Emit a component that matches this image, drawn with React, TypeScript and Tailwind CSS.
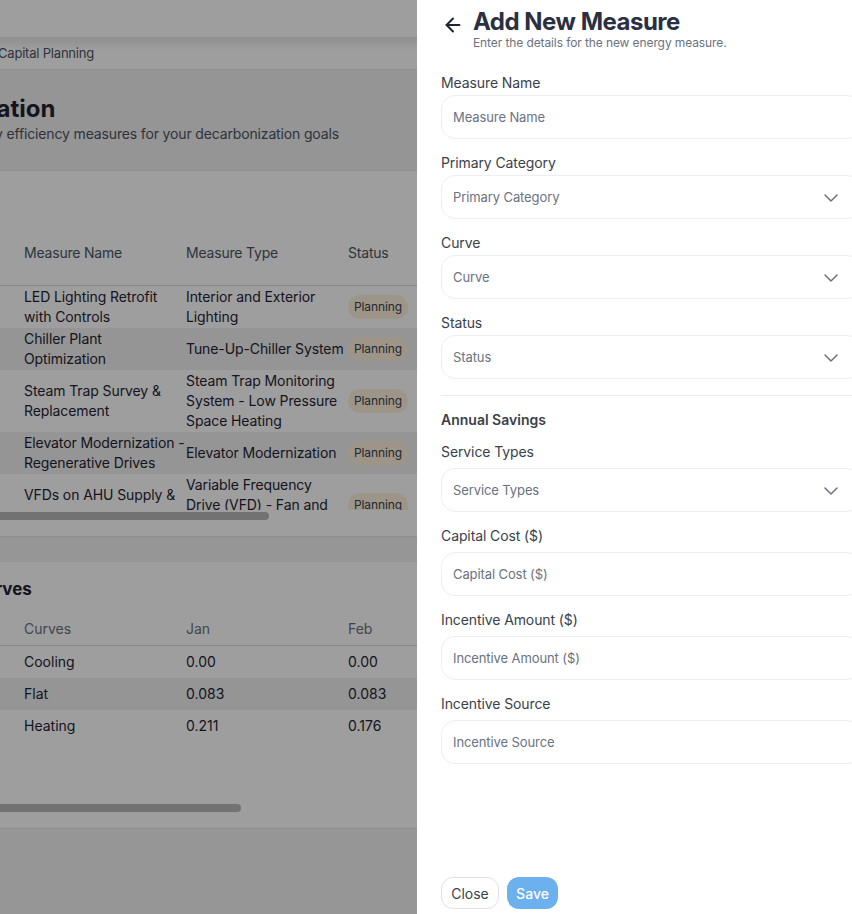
import { ArrowLeft, ChevronDown } from 'lucide-react';

const measures = [
  { name: 'LED Lighting Retrofit with Controls', type: 'Interior and Exterior Lighting', h: 'h-[42px]' },
  { name: 'Chiller Plant Optimization', type: 'Tune-Up-Chiller System', h: 'h-[42px]' },
  { name: 'Steam Trap Survey & Replacement', type: 'Steam Trap Monitoring System - Low Pressure Space Heating', h: 'h-[62px]' },
  { name: 'Elevator Modernization - Regenerative Drives', type: 'Elevator Modernization', h: 'h-[42px]' },
  { name: 'VFDs on AHU Supply & Return Fans', type: 'Variable Frequency Drive (VFD) - Fan and Pump Systems', h: 'h-[62px]', cut: true },
];

const curves = [
  { name: 'Cooling', jan: '0.00', feb: '0.00' },
  { name: 'Flat', jan: '0.083', feb: '0.083' },
  { name: 'Heating', jan: '0.211', feb: '0.176' },
];

function Field({ label, select, wide }: { label: string; select?: boolean; wide?: boolean }) {
  return (
    <div className="mt-[14px]">
      <label className={`block text-[14px] leading-[20px] tracking-[-0.1px] text-[#3a3f4b] ${wide ? 'mb-[6px]' : 'mb-[2px]'}`}>
        {label}
      </label>
      <div className="flex h-[44px] items-center justify-between rounded-[14px] border border-[#eceef1] bg-white pt-[1px] pr-[17px] pl-[11px]">
        {select ? (
          <>
            <span className="text-[13px] tracking-[-0.1px] text-[#6b7280]">{label}</span>
            <ChevronDown size={24} strokeWidth={1.5} className="text-[#6b7280]" />
          </>
        ) : (
          <input
            placeholder={label}
            className="w-full bg-transparent text-[13px] tracking-[-0.1px] outline-none placeholder:text-[#6b7280]"
          />
        )}
      </div>
    </div>
  );
}

export default function App() {
  return (
    <div className="flex h-[914px] w-[852px] overflow-hidden bg-white font-['Inter',sans-serif]">
      <div className="relative h-full w-[417px] shrink-0 overflow-hidden bg-[#f3f3f3]">
        <div className="h-[37px] bg-white" />
        <div className="flex h-[33px] items-center border-b border-[#e6e6e6] bg-white bg-gradient-to-b from-[#e6e6e6] to-white to-40% pt-[1px] text-[13px] tracking-[-0.2px] text-[#4b5563]">
          <span className="-ml-[2px] whitespace-nowrap">Capital Planning</span>
        </div>
        <div className="h-[101px] border-b border-[#e6e6e6] bg-[#f0f0f0] pt-[23px]">
          <h1 className="-ml-[128px] text-[24px] leading-[32px] font-bold whitespace-nowrap text-[#1f2433]">
            Implementation
          </h1>
          <p className="-ml-[42.5px] text-[14px] leading-[18px] tracking-[-0.15px] whitespace-nowrap text-[#4b5563]">
            energy efficiency measures for your decarbonization goals
          </p>
        </div>

        <section className="h-[366px] border-b border-[#e6e6e6] bg-white pt-[50px]">
          <div className="flex h-[65px] items-center border-b border-[#dedede] pb-[2px] pl-[24px] text-[14px] tracking-[-0.2px] text-[#4b5563]">
            <div className="w-[162px] shrink-0">Measure Name</div>
            <div className="w-[162px] shrink-0">Measure Type</div>
            <div className="shrink-0">Status</div>
          </div>
          <div className="h-[224px] overflow-hidden">
            {measures.map((m, i) => (
              <div
                key={m.name}
                className={`flex items-center pl-[24px] text-[14px] leading-[20px] tracking-[-0.1px] text-[#1f2433] ${m.h} ${i % 2 === 1 ? 'bg-[#f0f0f0]' : ''}`}
              >
                <div className={`w-[162px] shrink-0 ${m.cut ? 'mb-[20px] max-h-[20px] overflow-hidden' : ''}`}>{m.name}</div>
                <div className="w-[162px] shrink-0">{m.type}</div>
                <div className="shrink-0 rounded-full bg-[#fdf1dc] px-[6px] text-[12px] leading-[24px] whitespace-nowrap text-[#374151]">
                  Planning
                </div>
              </div>
            ))}
          </div>
          <div className="mt-[2px] h-[8px] w-[269px] rounded-r-full bg-[#b9b9b9]" />
        </section>

        <section className="mt-[25px] h-[267px] border-b border-[#e6e6e6] bg-white pt-[15px]">
          <h2 className="-ml-[28px] text-[17px] leading-[24px] font-bold whitespace-nowrap text-[#1f2433]">Curves</h2>
          <div className="mt-[12px] flex h-[33px] items-center border-b border-[#dedede] pb-[2px] pl-[24px] text-[14px] text-[#6b7280]">
            <div className="w-[162px] shrink-0">Curves</div>
            <div className="w-[162px] shrink-0">Jan</div>
            <div className="shrink-0">Feb</div>
          </div>
          {curves.map((c, i) => (
            <div
              key={c.name}
              className={`flex h-[32px] items-center pb-[2px] pl-[24px] text-[14px] text-[#1f2433] ${i === 1 ? 'bg-[#f0f0f0]' : ''}`}
            >
              <div className="w-[162px] shrink-0">{c.name}</div>
              <div className="w-[162px] shrink-0">{c.jan}</div>
              <div className="shrink-0">{c.feb}</div>
            </div>
          ))}
          <div className="mt-[62px] h-[8px] w-[241px] rounded-r-full bg-[#b9b9b9]" />
        </section>

        <div className="absolute inset-0 bg-black/38" />
      </div>

      <aside className="flex h-full w-[445px] shrink-0 flex-col bg-white pr-[1px] pb-[5px] pl-[24px]">
        <div className="flex h-[59px] pt-[6px]">
          <ArrowLeft size={22} strokeWidth={2.2} className="mt-[8px] ml-[1px] text-[#1f2433]" />
          <div className="ml-[9px]">
            <h2 className="text-[24px] leading-[32px] font-bold tracking-[-0.5px] text-[#2a3042]">Add New Measure</h2>
            <p className="-mt-[2px] text-[12px] leading-[14px] tracking-[-0.1px] text-[#6b7280]">
              Enter the details for the new energy measure.
            </p>
          </div>
        </div>
        <Field label="Measure Name" />
        <Field label="Primary Category" select />
        <Field label="Curve" select />
        <Field label="Status" select />
        <div className="mt-[16px] border-t border-[#e9ebee] pt-[14px] text-[14px] leading-[20px] font-semibold text-[#3a3f4b]">
          Annual Savings
        </div>
        <div className="-mt-[2px]">
          <Field label="Service Types" select wide />
        </div>
        <Field label="Capital Cost ($)" wide />
        <Field label="Incentive Amount ($)" wide />
        <Field label="Incentive Source" wide />
        <div className="mt-auto flex gap-[8px]">
          <button className="h-[32px] w-[58px] rounded-[12px] border border-[#dfe1e5] bg-white text-[14px] text-[#3a3f4b]">
            Close
          </button>
          <button className="h-[32px] w-[51px] rounded-[12px] bg-[#6cb0ee] text-[14px] font-medium text-white">
            Save
          </button>
        </div>
      </aside>
    </div>
  );
}
